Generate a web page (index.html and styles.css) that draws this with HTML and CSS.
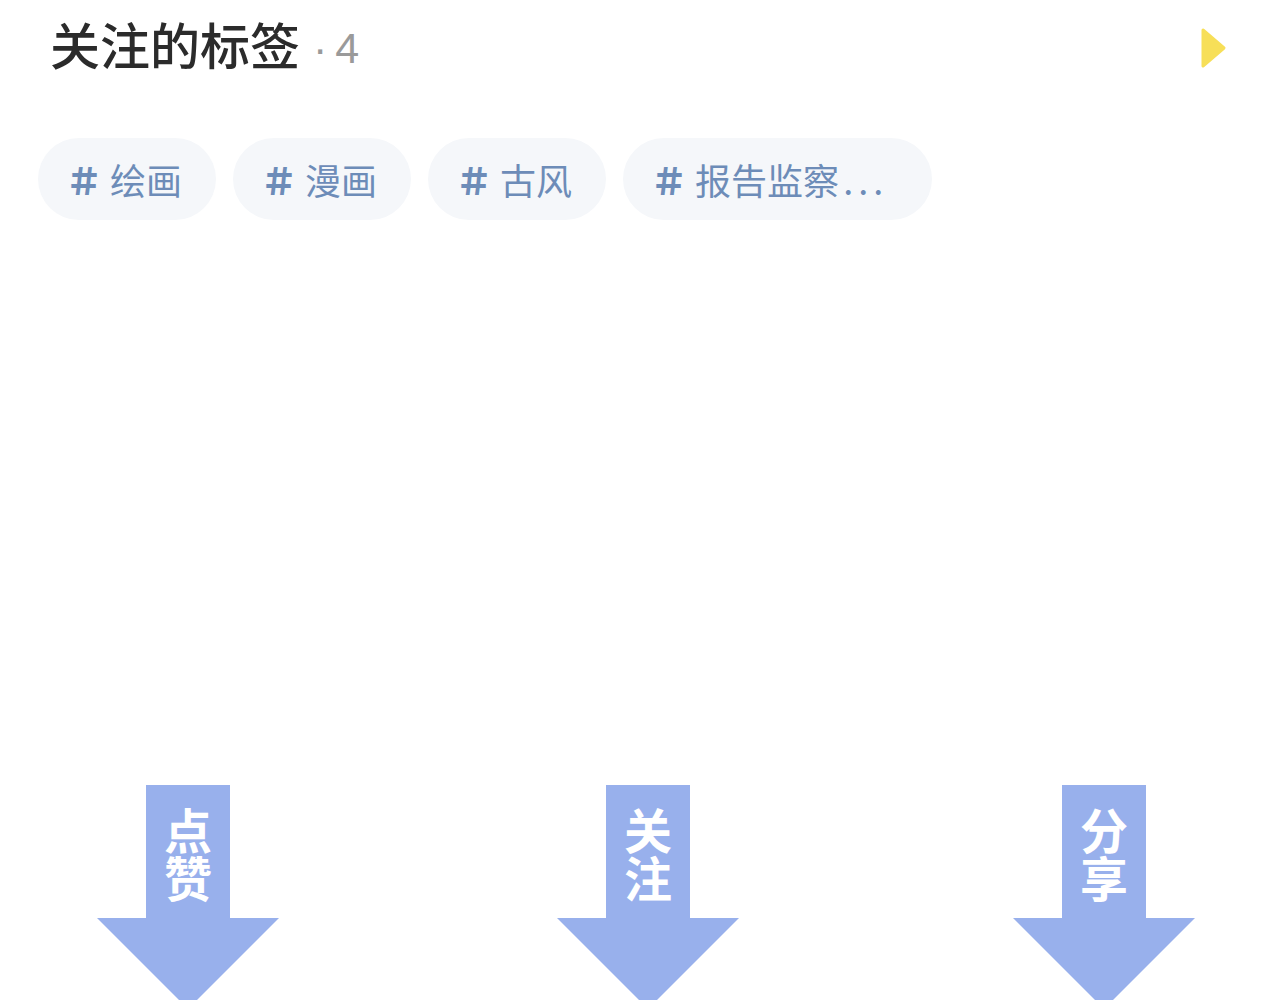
FILE: index.html
```html
<!DOCTYPE html>
<html lang="zh">
<head>
<meta charset="utf-8">
<link rel="stylesheet" href="styles.css">
</head>
<body>
<div class="page">
  <header class="header">
    <h1 class="title">关注的标签<span class="count"><span class="dot">·</span>4</span></h1>
    <svg class="more" width="26" height="42" viewBox="0 0 26 42"><path d="M2 3 L23 21 L2 39 Z" fill="#f7df58" stroke="#f7df58" stroke-width="3" stroke-linejoin="round"/></svg>
  </header>
  <div class="tags">
    <span class="tag"><b class="hash">＃</b>绘画</span>
    <span class="tag"><b class="hash">＃</b>漫画</span>
    <span class="tag"><b class="hash">＃</b>古风</span>
    <span class="tag tag-long"><b class="hash">＃</b>报告监察<span class="ellipsis">...</span></span>
  </div>
  <div class="spacer"></div>
  <div class="arrows">
    <div class="arrow"><div class="shaft">点赞</div><div class="head"></div></div>
    <div class="arrow arrow-mid"><div class="shaft">关注</div><div class="head"></div></div>
    <div class="arrow"><div class="shaft">分享</div><div class="head"></div></div>
  </div>
</div>
</body>
</html>
```
FILE: styles.css
```css
html, body {
  margin: 0;
  padding: 0;
  background: #ffffff;
  overflow: hidden;
}
body {
  font-family: "Noto Sans CJK SC", "Noto Sans", sans-serif;
  width: 1280px;
  height: 1000px;
}
.page {
  display: flex;
  flex-direction: column;
  height: 1000px;
}
.header {
  display: flex;
  align-items: center;
  justify-content: space-between;
  padding: 14px 53px 0 50px;
  height: 64px;
}
.title {
  margin: 0;
  font-size: 50px;
  font-weight: 500;
  color: #2b2b2b;
  line-height: 64px;
  display: flex;
  align-items: baseline;
}
.count {
  font-family: "Liberation Sans", "Noto Sans", sans-serif;
  font-size: 43px;
  font-weight: 400;
  color: #9a9a9a;
  margin-left: 13px;
  position: relative;
  top: -2px;
}
.dot {
  margin-right: 8px;
}
.more {
  display: block;
  margin-top: 4px;
}
.tags {
  display: flex;
  gap: 17px;
  padding: 60px 0 0 38px;
}
.tag {
  display: flex;
  align-items: center;
  height: 82px;
  padding: 0 34px 0 28px;
  border-radius: 41px;
  background: #f5f7fa;
  color: #6d8cb8;
  font-size: 36px;
  line-height: 1;
}
.tag-long {
  padding-right: 44px;
}
.ellipsis {
  letter-spacing: 5px;
  margin-left: 4px;
}
.hash {
  font-weight: 900;
  font-size: 36px;
  margin-right: 8px;
}
.spacer {
  flex: 1;
}
.arrows {
  display: flex;
  gap: 276px;
  padding-left: 97px;
  height: 215px;
  overflow: hidden;
}
.arrow {
  width: 182px;
  display: flex;
  flex-direction: column;
  align-items: center;
  flex-shrink: 0;
}
.arrow-mid {
  margin-left: 2px;
  margin-right: -2px;
}
.shaft {
  flex-shrink: 0;
  width: 84px;
  height: 133px;
  background: #98b0ec;
  color: #ffffff;
  font-size: 48px;
  font-weight: 700;
  line-height: 84px;
  writing-mode: vertical-rl;
  text-orientation: upright;
  text-align: start;
  padding-top: 22px;
  box-sizing: border-box;
}
.head {
  flex-shrink: 0;
  width: 0;
  height: 0;
  border-left: 91px solid transparent;
  border-right: 91px solid transparent;
  border-top: 91px solid #98b0ec;
}
```
